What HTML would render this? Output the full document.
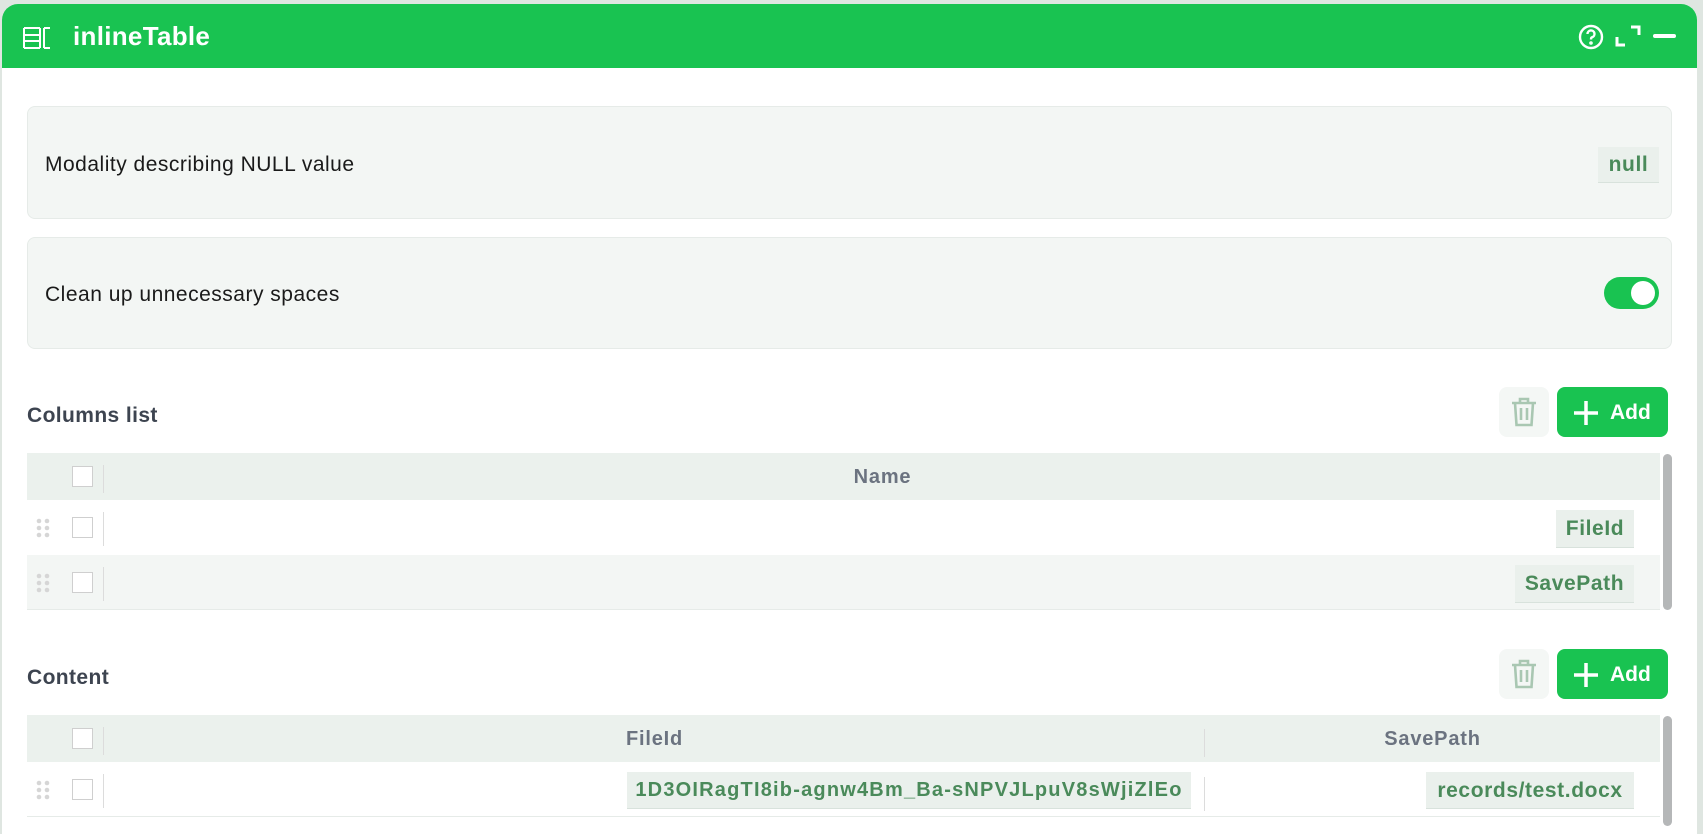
<!DOCTYPE html>
<html><head><meta charset="utf-8"><style>
*{box-sizing:border-box;margin:0;padding:0}
body{width:1703px;height:826px;background:#dfe6e1;font-family:"Liberation Sans",sans-serif;position:relative;overflow:hidden}
.abs{position:absolute}
.card{left:2px;top:4px;width:1695px;height:830px;background:#fff;border-radius:16px 16px 0 0;overflow:hidden}
.hdr{left:0;top:0;width:1695px;height:64px;background:#19c351}
.box{background:#f3f6f4;border:1px solid #e6ebe8;border-radius:8px}
.lbl{font-size:21px;letter-spacing:0.5px;color:#1a1a1a}
.tag{background:#eaf0ec;border-bottom:1px solid #d8e2dc;color:#4a8a5a;font-weight:bold;font-size:21px;letter-spacing:0.6px;text-align:center}
.sec{font-size:21px;letter-spacing:0.4px;font-weight:bold;color:#3d4450}
.trash{width:50px;height:50px;background:#f4f7f5;border-radius:8px}
.add{width:111px;height:50px;background:#19c351;border-radius:8px;color:#fff;font-weight:bold;font-size:21px}
.th{background:#ebf1ed}
.cb{width:21px;height:21px;border:1px solid #cfcfcf;background:#fff}
.sep{width:1px;background:#dcdcdc}
.dots{width:14px;height:20px}
.hd{font-size:20px;letter-spacing:0.8px;font-weight:bold;color:#6b7380;text-align:center}
</style></head><body>
<div class="abs card">
 <div class="abs hdr">
  <svg class="abs" style="left:21px;top:23px" width="28" height="22" viewBox="0 0 28 22" fill="none" stroke="#fff" stroke-width="2"><path d="M1 1h16M1 21h16M1 1v20M1 8h16M1 14h16M17 1v20M21 1h6M21 21h6M21 1v20"/></svg>
  <div class="abs" style="left:71px;top:17px;color:#fff;font-weight:bold;font-size:26px;letter-spacing:0.3px">inlineTable</div>
  <svg class="abs" style="left:1576px;top:20px" width="26" height="26" viewBox="0 0 26 26" fill="none" stroke="#fff" stroke-width="2.4"><circle cx="13" cy="13" r="11"/><path d="M9.5 10a3.5 3.5 0 1 1 4.5 3.3c-1 .4-1 1-1 2.2"/><circle cx="13" cy="19" r=".6" fill="#fff"/></svg>
  <svg class="abs" style="left:1613px;top:19px" width="26" height="26" viewBox="0 0 26 26" fill="none" stroke="#fff" stroke-width="3"><path d="M2 14v8h8M16 4h8v8"/></svg>
  <div class="abs" style="left:1651px;top:30px;width:23px;height:4px;background:#fff;border-radius:2px"></div>
 </div>
 <div class="abs box" style="left:25px;top:102px;width:1645px;height:113px">
  <div class="abs lbl" style="left:17px;top:46px">Modality describing NULL value</div>
  <div class="abs tag" style="left:1570px;top:40px;width:61px;height:36px;line-height:36px">null</div>
 </div>
 <div class="abs box" style="left:25px;top:233px;width:1645px;height:112px">
  <div class="abs lbl" style="left:17px;top:45px">Clean up unnecessary spaces</div>
  <div class="abs" style="left:1576px;top:39px;width:55px;height:32px;background:#19c351;border-radius:16px"><div class="abs" style="right:4px;top:4px;width:24px;height:24px;background:#fff;border-radius:50%"></div></div>
 </div>
 <div class="abs sec" style="left:25px;top:400px">Columns list</div>
 <div class="abs trash" style="left:1497px;top:383px"><svg class="abs" style="left:12px;top:10px" width="26" height="30" viewBox="0 0 26 30" fill="none" stroke="#a9c7b2" stroke-width="2.6"><path d="M1 6h24M9 6V2h8v4M4 6l1.5 22h15L22 6M10 11v12M16 11v12"/></svg></div>
 <div class="abs add" style="left:1555px;top:383px"><svg class="abs" style="left:16px;top:13px" width="26" height="26" viewBox="0 0 26 26" stroke="#fff" stroke-width="3.5"><path d="M13 1v24M1 13h24"/></svg><div class="abs" style="left:53px;top:14px">Add</div></div>
 <div class="abs th" style="left:25px;top:449px;width:1633px;height:47px"></div>
 <div class="abs" style="left:25px;top:496px;width:1633px;height:55px;background:#fff"></div>
 <div class="abs" style="left:25px;top:551px;width:1633px;height:55px;background:#f3f6f4;border-bottom:1px solid #e6ebe8"></div>
 <div class="abs" style="left:1661px;top:450px;width:9px;height:156px;background:#b5b7b8;border-radius:5px"></div>
 <div class="abs hd" style="left:103px;top:462px;width:1555px">Name</div>
 <div class="abs cb" style="left:70px;top:462px"></div><div class="abs sep" style="left:101px;top:461px;height:28px"></div>
 <div class="abs cb" style="left:70px;top:513px"></div><div class="abs sep" style="left:101px;top:508px;height:34px"></div>
 <div class="abs cb" style="left:70px;top:568px"></div><div class="abs sep" style="left:101px;top:563px;height:34px"></div>
 <svg class="abs dots" style="left:34px;top:514px" viewBox="0 0 14 20" fill="#d6d6d6"><circle cx="3" cy="3" r="2.3"/><circle cx="11" cy="3" r="2.3"/><circle cx="3" cy="10" r="2.3"/><circle cx="11" cy="10" r="2.3"/><circle cx="3" cy="17" r="2.3"/><circle cx="11" cy="17" r="2.3"/></svg>
 <svg class="abs dots" style="left:34px;top:569px" viewBox="0 0 14 20" fill="#d6d6d6"><circle cx="3" cy="3" r="2.3"/><circle cx="11" cy="3" r="2.3"/><circle cx="3" cy="10" r="2.3"/><circle cx="11" cy="10" r="2.3"/><circle cx="3" cy="17" r="2.3"/><circle cx="11" cy="17" r="2.3"/></svg>
 <div class="abs tag" style="left:1554px;top:506px;width:78px;height:38px;line-height:38px">FileId</div>
 <div class="abs tag" style="left:1513px;top:561px;width:119px;height:38px;line-height:38px">SavePath</div>

 <div class="abs sec" style="left:25px;top:662px">Content</div>
 <div class="abs trash" style="left:1497px;top:645px"><svg class="abs" style="left:12px;top:10px" width="26" height="30" viewBox="0 0 26 30" fill="none" stroke="#a9c7b2" stroke-width="2.6"><path d="M1 6h24M9 6V2h8v4M4 6l1.5 22h15L22 6M10 11v12M16 11v12"/></svg></div>
 <div class="abs add" style="left:1555px;top:645px"><svg class="abs" style="left:16px;top:13px" width="26" height="26" viewBox="0 0 26 26" stroke="#fff" stroke-width="3.5"><path d="M13 1v24M1 13h24"/></svg><div class="abs" style="left:53px;top:14px">Add</div></div>
 <div class="abs th" style="left:25px;top:711px;width:1633px;height:47px"></div>
 <div class="abs" style="left:25px;top:758px;width:1633px;height:55px;background:#fff;border-bottom:1px solid #e6ebe8"></div>
 <div class="abs" style="left:1661px;top:712px;width:9px;height:110px;background:#b5b7b8;border-radius:5px"></div>
 <div class="abs cb" style="left:70px;top:724px"></div><div class="abs sep" style="left:101px;top:723px;height:28px"></div>
 <div class="abs sep" style="left:1202px;top:725px;height:28px"></div>
 <div class="abs hd" style="left:103px;top:724px;width:1099px">FileId</div>
 <div class="abs hd" style="left:1203px;top:724px;width:455px">SavePath</div>
 <div class="abs cb" style="left:70px;top:775px"></div><div class="abs sep" style="left:101px;top:770px;height:34px"></div>
 <div class="abs sep" style="left:1202px;top:773px;height:34px"></div>
 <svg class="abs dots" style="left:34px;top:776px" viewBox="0 0 14 20" fill="#d6d6d6"><circle cx="3" cy="3" r="2.3"/><circle cx="11" cy="3" r="2.3"/><circle cx="3" cy="10" r="2.3"/><circle cx="11" cy="10" r="2.3"/><circle cx="3" cy="17" r="2.3"/><circle cx="11" cy="17" r="2.3"/></svg>
 <div class="abs tag" style="left:625px;top:768px;width:564px;height:37px;line-height:37px;font-size:20px;letter-spacing:1.2px;white-space:nowrap;overflow:hidden">1D3OIRagTI8ib-agnw4Bm_Ba-sNPVJLpuV8sWjiZlEo</div>
 <div class="abs tag" style="left:1424px;top:768px;width:208px;height:37px;line-height:37px">records/test.docx</div>
</div>
</body></html>
